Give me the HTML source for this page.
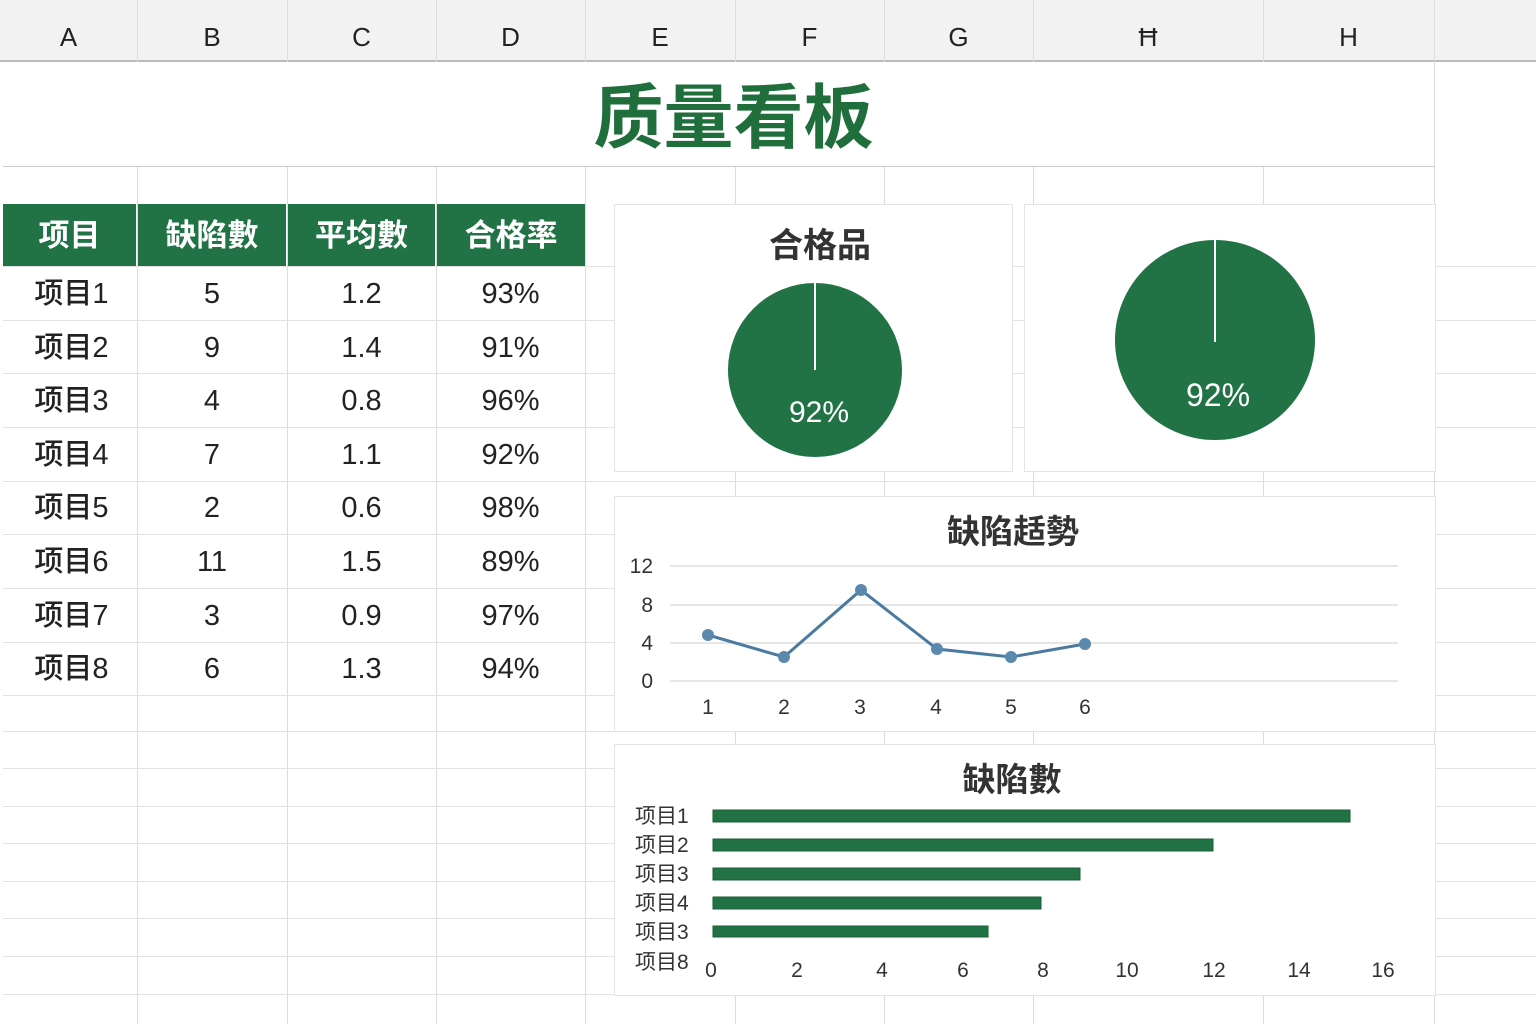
<!DOCTYPE html>
<html><head><meta charset="utf-8"><style>
body{margin:0;width:1536px;height:1024px;overflow:hidden;background:#fff;font-family:"Liberation Sans","Noto Sans CJK SC",sans-serif;position:relative}
.a{position:absolute}
.vl{position:absolute;top:0;width:1px;height:1024px;background:#dcdcdc}
.hl{position:absolute;left:0;width:1536px;height:1px;background:#e2e2e2}
.ch{position:absolute;top:0;height:60px;line-height:74px;text-align:center;font-size:26px;color:#222}
.c{position:absolute;text-align:center;font-size:29px;color:#222;height:53px;line-height:56px}
.th{position:absolute;top:204px;height:62px;line-height:64px;text-align:center;color:#fff;font-size:31px;font-weight:bold;background:#217346}
.panel{position:absolute;background:#fff;border:1px solid #e4e4e4}
</style></head><body>
<div class="a" style="left:0;top:0;width:1536px;height:60px;background:#f2f2f2;border-bottom:2px solid #bbb"></div>
<div class="vl" style="left:137px"></div><div class="vl" style="left:287px"></div><div class="vl" style="left:436px"></div><div class="vl" style="left:585px"></div><div class="vl" style="left:735px"></div><div class="vl" style="left:884px"></div><div class="vl" style="left:1033px"></div><div class="vl" style="left:1263px"></div><div class="vl" style="left:1434px"></div>
<div class="ch" style="left:0;width:137px">A</div><div class="ch" style="left:137px;width:150px">B</div><div class="ch" style="left:287px;width:149px">C</div><div class="ch" style="left:436px;width:149px">D</div><div class="ch" style="left:585px;width:150px">E</div><div class="ch" style="left:735px;width:149px">F</div><div class="ch" style="left:884px;width:149px">G</div><div class="ch" style="left:1033px;width:230px">Ħ</div><div class="ch" style="left:1263px;width:171px">H</div>
<div class="a" style="left:3px;top:62px;width:1431px;height:104px;background:#fff;border-bottom:1px solid #ccc"></div>
<div class="a" style="left:33px;top:62px;width:1401px;text-align:center;font-size:70px;font-weight:bold;color:#1f6e3b;line-height:112px">质量看板</div>
<div class="hl" style="top:266px"></div><div class="hl" style="top:320px"></div><div class="hl" style="top:373px"></div><div class="hl" style="top:427px"></div><div class="hl" style="top:481px"></div><div class="hl" style="top:534px"></div><div class="hl" style="top:588px"></div><div class="hl" style="top:642px"></div><div class="hl" style="top:695px"></div><div class="hl" style="top:731px"></div><div class="hl" style="top:768px"></div><div class="hl" style="top:806px"></div><div class="hl" style="top:843px"></div><div class="hl" style="top:881px"></div><div class="hl" style="top:918px"></div><div class="hl" style="top:956px"></div><div class="hl" style="top:994px"></div>
<div class="a" style="left:0;top:204px;width:3px;height:820px;background:#fff"></div>
<div class="th" style="left:3px;width:133px">项目</div><div class="th" style="left:138px;width:148px">缺陷數</div><div class="th" style="left:288px;width:147px">平均數</div><div class="th" style="left:437px;width:148px">合格率</div>
<div id="rows"></div>
<script>
var d=[["项目1",5,"1.2","93%"],["项目2",9,"1.4","91%"],["项目3",4,"0.8","96%"],["项目4",7,"1.1","92%"],["项目5",2,"0.6","98%"],["项目6",11,"1.5","89%"],["项目7",3,"0.9","97%"],["项目8",6,"1.3","94%"]];
var h="",xs=[[3,137],[137,150],[287,149],[436,149]];
d.forEach(function(r,i){var t=266+i*53.6;r.forEach(function(v,j){h+='<div class="c" style="top:'+t+'px;left:'+xs[j][0]+'px;width:'+xs[j][1]+'px'+(j==0?';font-weight:500':'')+'">'+v+'</div>'})});
document.getElementById("rows").innerHTML=h;
</script>
<div class="panel" style="left:614px;top:204px;width:397px;height:266px"></div>
<div class="a" style="left:614px;top:218px;width:412px;text-align:center;font-size:34px;font-weight:bold;color:#333">合格品</div>
<div class="panel" style="left:1024px;top:204px;width:410px;height:266px"></div>
<div class="panel" style="left:614px;top:496px;width:820px;height:234px"></div>
<div class="panel" style="left:614px;top:744px;width:820px;height:250px"></div>
<svg class="a" style="left:0;top:0" width="1536" height="1024">
<circle cx="815" cy="370" r="87" fill="#217346"/><line x1="815" y1="283" x2="815" y2="370" stroke="#fff" stroke-width="2"/>
<text x="819" y="422" fill="#fff" font-size="30" text-anchor="middle" font-family="Liberation Sans">92%</text>
<circle cx="1215" cy="340" r="100" fill="#217346"/><line x1="1215" y1="240" x2="1215" y2="342" stroke="#fff" stroke-width="2"/>
<text x="1218" y="406" fill="#fff" font-size="32" text-anchor="middle" font-family="Liberation Sans">92%</text>
<text x="1013" y="543" font-size="33" font-weight="bold" fill="#333" text-anchor="middle" font-family="Noto Sans CJK SC">缺陷趏勢</text>
<g stroke="#ddd" stroke-width="1.5"><line x1="670" y1="566" x2="1398" y2="566"/><line x1="670" y1="605" x2="1398" y2="605"/><line x1="670" y1="643" x2="1398" y2="643"/><line x1="670" y1="681" x2="1398" y2="681"/></g>
<g font-size="21" fill="#333" font-family="Liberation Sans" text-anchor="end"><text x="653" y="573">12</text><text x="653" y="612">8</text><text x="653" y="650">4</text><text x="653" y="688">0</text></g>
<g font-size="21" fill="#333" font-family="Liberation Sans" text-anchor="middle"><text x="708" y="714">1</text><text x="784" y="714">2</text><text x="860" y="714">3</text><text x="936" y="714">4</text><text x="1011" y="714">5</text><text x="1085" y="714">6</text></g>
<polyline points="708,635 784,657 861,590 937,649 1011,657 1085,644" fill="none" stroke="#4a7aa0" stroke-width="3"/>
<g fill="#5b88ad"><circle cx="708" cy="635" r="6"/><circle cx="784" cy="657" r="6"/><circle cx="861" cy="590" r="6"/><circle cx="937" cy="649" r="6"/><circle cx="1011" cy="657" r="6"/><circle cx="1085" cy="644" r="6"/></g>
<text x="1012" y="791" font-size="33" font-weight="bold" fill="#333" text-anchor="middle" font-family="Noto Sans CJK SC">缺陷數</text>
<g fill="#217346" stroke="#1a5c37"><rect x="713" y="810" width="637" height="12"/><rect x="713" y="839" width="500" height="12"/><rect x="713" y="868" width="367" height="12"/><rect x="713" y="897" width="328" height="12"/><rect x="713" y="926" width="275" height="11"/></g>
<g font-size="21" fill="#333" font-family="Liberation Sans,Noto Sans CJK SC"><text x="635" y="823">项目1</text><text x="635" y="852">项目2</text><text x="635" y="881">项目3</text><text x="635" y="910">项目4</text><text x="635" y="939">项目3</text><text x="635" y="969">项目8</text></g>
<g font-size="21" fill="#333" font-family="Liberation Sans" text-anchor="middle"><text x="711" y="977">0</text><text x="797" y="977">2</text><text x="882" y="977">4</text><text x="963" y="977">6</text><text x="1043" y="977">8</text><text x="1127" y="977">10</text><text x="1214" y="977">12</text><text x="1299" y="977">14</text><text x="1383" y="977">16</text></g>
</svg>
</body></html>
